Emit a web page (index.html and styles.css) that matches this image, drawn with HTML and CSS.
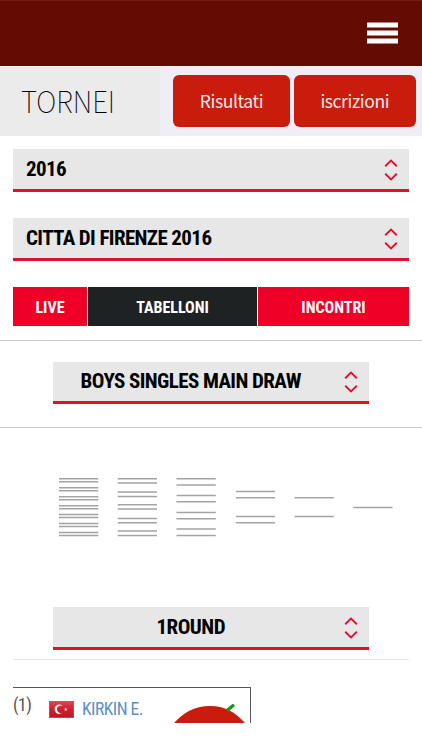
FILE: index.html
```
<!DOCTYPE html>
<html lang="it">
<head>
<meta charset="utf-8">
<meta name="viewport" content="width=device-width">
<title>Tornei</title>
<link rel="stylesheet" href="styles.css">
</head>
<body>
<header class="topbar">
  <svg class="burger" width="31" height="22" viewBox="0 0 31 22"><path d="M0 3h31M0 11h31M0 19h31" stroke="#fff" stroke-width="5"/></svg>
</header>
<section class="heading">
  <h1><span class="title">TORNEI</span></h1>
  <nav class="actions"><a class="pill results">Risultati</a><a class="pill entries">iscrizioni</a></nav>
</section>
<main>
  <div class="select year"><span class="label">2016</span><svg class="chev" width="14" height="22" viewBox="0 0 14 22"><path d="M1.200 7.200 7 1.600 12.800 7.200M1.200 14.800 7 20.400 12.800 14.800"/></svg></div>
  <div class="select event"><span class="label">CITTA DI FIRENZE 2016</span><svg class="chev" width="14" height="22" viewBox="0 0 14 22"><path d="M1.200 7.200 7 1.600 12.800 7.200M1.200 14.800 7 20.400 12.800 14.800"/></svg></div>
  <nav class="tabs"><a>LIVE</a><a class="active">TABELLONI</a><a>INCONTRI</a></nav>
  <section class="draw">
    <div class="select centered"><span class="label">BOYS SINGLES MAIN DRAW</span><svg class="chev" width="14" height="22" viewBox="0 0 14 22"><path d="M1.200 7.200 7 1.600 12.800 7.200M1.200 14.800 7 20.400 12.800 14.800"/></svg></div>
  </section>
  <svg class="bracket" width="422" height="60" viewBox="0 0 422 60">
    <path d="M59 1.7h39.3M59 4.7h39.3M59 10.7h39.3M59 13.7h39.3M59 19.7h39.3M59 22.7h39.3M59 28.7h39.3M59 31.7h39.3M59 37.4h39.3M59 40.4h39.3M59 46.4h39.3M59 49.4h39.3M59 55.4h39.3M59 58.4h39.3"/>
    <path d="M117.7 1.7h39.3M117.7 6h39.3M117.7 15h39.3M117.7 19.4h39.3M117.7 27.7h39.3M117.7 32h39.3M117.7 41.4h39.3M117.7 45.7h39.3M117.7 54h39.3M117.7 58.4h39.3"/>
    <path d="M176.5 1.7h39.3M176.5 8h39.3M176.5 18.4h39.3M176.5 24.7h39.3M176.5 35.4h39.3M176.5 41.7h39.3M176.5 52h39.3M176.5 58.4h39.3"/>
    <path d="M235.8 14.4h39.2M235.8 20.7h39.2M235.8 39.4h39.2M235.8 45.7h39.2M294.5 20.7h39.2M294.5 39.4h39.2M353.3 30.4h39.2"/>
  </svg>
  <div class="select centered round"><span class="label">1ROUND</span><svg class="chev" width="14" height="22" viewBox="0 0 14 22"><path d="M1.200 7.200 7 1.600 12.800 7.200M1.200 14.800 7 20.400 12.800 14.800"/></svg></div>
  <hr>
  <div class="match">
    <span class="seed">(1)</span>
    <svg class="flag" width="25" height="17" viewBox="0 0 25 17"><defs><linearGradient id="g" x2="0" y2="1"><stop stop-color="#dc4550"/><stop offset=".5" stop-color="#d01f2d"/><stop offset="1" stop-color="#bd1423"/></linearGradient></defs><rect x=".3" y=".3" width="24.4" height="16.4" fill="url(#g)" stroke="#b83a43" stroke-width=".6"/><path d="M13.6 5A4.7 4.7 0 1 0 13.6 11.6A3.8 3.8 0 1 1 13.6 5Z" fill="#fff"/><path d="m16.8 6.2.5 1.5h1.6l-1.3.9.5 1.5-1.3-.9-1.3.9.5-1.5-1.3-.9h1.6z" fill="#fbdfe0"/></svg>
    <span class="player">KIRKIN E.</span>
    <svg class="ball" width="72" height="19" viewBox="0 0 72 19"><path d="M0 19C9 9 20 2 36 2S62 9 71 19Z" fill="#c91c0c"/><path d="M53 6.500 60 .8" stroke="#0b9a1b" stroke-width="3.200"/></svg>
  </div>
</main>
</body>
</html>
```
FILE: styles.css
```
* { box-sizing: border-box; }
body { margin: 0; background: #fff; color: #000; font-family: "Roboto Condensed", Roboto, sans-serif; font-stretch: 75%; width: 422px; height: 750px; overflow: hidden; }
.topbar { height: 66px; background: #640c04; border-top: 1px solid #701d19; padding: 21px 24px 0 0; display: flex; justify-content: flex-end; align-items: flex-start; }
.heading { height: 70px; border-top: 1px solid #f7f3f5; display: flex; background: #efedf5; font-family: "Noto Sans CJK SC", sans-serif; }
h1 { margin: 0; width: 160px; background: #ebebeb; padding-left: 20.500px; font-size: 30px; font-weight: 100; line-height: 67px; color: #000; }
.title { display: inline-block; transform: scaleX(.93); transform-origin: left; font-family: "Noto Sans CJK SC Thin", "Noto Sans CJK SC", sans-serif; }
.actions { display: flex; gap: 4px; padding: 8px 0 0 13px; }
.pill { height: 52px; border-radius: 6px; background: #c91c0c; color: #fde9e7; font-size: 17.500px; letter-spacing: -.4px; line-height: 51px; text-align: center; }
.results { width: 117px; }
.entries { width: 121.5px; }
.select { height: 42.500px; margin: 0 13px; background: #e7e7e7; border-bottom: 3px solid #e0102e; display: flex; justify-content: space-between; align-items: center; padding: 0 11px 0 13px; font-size: 21px; font-weight: 700; letter-spacing: -.6px; }
.label { white-space: nowrap; }
.chev { margin-top: 2px; }
.chev path { fill: none; stroke: #e0102e; stroke-width: 1.900; }
.year { margin-top: 13px; }
.event { margin-top: 26.500px; }
.tabs { display: grid; grid-template-columns: 74px 169px 151px; grid-template-rows: 39px; gap: 1px; margin: 26.500px 13px 0; height: 39px; }
.tabs a { background: #ef0027; color: #fff; font-size: 16px; font-weight: 700; line-height: 41px; height: 39px; text-align: center; }
.tabs .active { background: #1e2222; }
.draw { margin-top: 13.500px; height: 88px; border-top: 1.500px solid #ccc; border-bottom: 1.500px solid #ccc; padding-top: 21px; }
.centered { margin: 0 53px 0 52.500px; }
.centered .label { flex: 1; text-align: center; padding-right: 28px; }
.bracket { display: block; margin-top: 49px; }
.bracket path { stroke: #a3a3a3; stroke-width: 1.500; }
.round { margin-top: 70.500px; letter-spacing: -.5px; }
hr { border: 0; height: 1px; background: #e8e8e8; margin: 9px 13px 0; }
.match { margin: 27px 0 0 13px; width: 237.500px; height: 36.500px; border-top: 1px solid #555; border-right: 1px solid #555; display: flex; align-items: center; }
.seed { font-size: 17.500px; letter-spacing: -.4px; color: #555; width: 36px; margin-top: 0; }
.flag { margin-top: 8px; }
.player { font-size: 17.500px; letter-spacing: -.5px; color: #5b8fc9; margin: 8px 0 0 8px; width: 92px; white-space: nowrap; }
.ball { align-self: flex-end; flex: none; }
```
